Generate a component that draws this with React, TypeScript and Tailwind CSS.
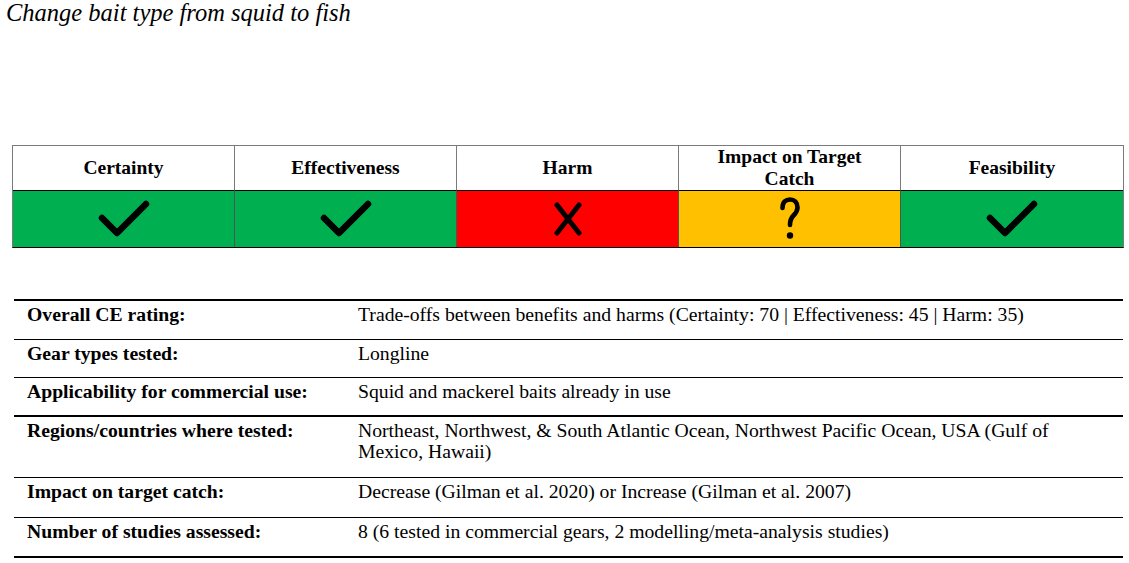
import React from "react";

type Rating = "yes" | "no" | "unknown";

const ratings: { label: string[]; rating: Rating }[] = [
  { label: ["Certainty"], rating: "yes" },
  { label: ["Effectiveness"], rating: "yes" },
  { label: ["Harm"], rating: "no" },
  { label: ["Impact on Target", "Catch"], rating: "unknown" },
  { label: ["Feasibility"], rating: "yes" },
];

const details = [
  { label: "Overall CE rating:", value: "Trade-offs between benefits and harms (Certainty: 70 | Effectiveness: 45 | Harm: 35)", h: "h-[39px]", thick: false },
  { label: "Gear types tested:", value: "Longline", h: "h-[38px]", thick: false },
  { label: "Applicability for commercial use:", value: "Squid and mackerel baits already in use", h: "h-[39px]", thick: true },
  { label: "Regions/countries where tested:", value: "Northeast, Northwest, & South Atlantic Ocean, Northwest Pacific Ocean, USA (Gulf of Mexico, Hawaii)", h: "h-[61px]", thick: false },
  { label: "Impact on target catch:", value: "Decrease (Gilman et al. 2020) or Increase (Gilman et al. 2007)", h: "h-[40px]", thick: false },
  { label: "Number of studies assessed:", value: "8 (6 tested in commercial gears, 2 modelling/meta-analysis studies)", h: "h-[40px]", thick: true },
];

const CheckIcon = () => (
  <svg width="52" height="38" viewBox="0 0 52 38">
    <path d="M4 18 L19 33 L48 4" fill="none" stroke="#000" strokeWidth="6.5" strokeLinecap="round" strokeLinejoin="round" />
  </svg>
);

const CrossIcon = () => (
  <svg width="28" height="34" viewBox="0 0 28 34">
    <path d="M3 3 L25 31 M25 3 L3 31" fill="none" stroke="#000" strokeWidth="5" strokeLinecap="round" />
  </svg>
);

const QuestionIcon = () => (
  <svg width="20" height="44" viewBox="0 0 20 44">
    <path d="M2.5 11 C2.5 5 6 2.5 10 2.5 C14.5 2.5 17.5 5.5 17.5 10.5 C17.5 14.5 15.5 16.5 13.5 18.5 C11 21 10 23 10 28" fill="none" stroke="#000" strokeWidth="4.6" strokeLinecap="round" />
    <circle cx="10" cy="38.5" r="3.2" fill="#000" />
  </svg>
);

const ratingCell = (rating: Rating) => {
  if (rating === "yes") return { bg: "bg-[#00b050]", icon: <CheckIcon /> };
  if (rating === "no") return { bg: "bg-[#ff0000]", icon: <CrossIcon /> };
  return { bg: "bg-[#ffc000]", icon: <QuestionIcon /> };
};

export default function App() {
  return (
    <div className="w-[1129px] h-[563px] bg-white text-black font-['Liberation_Serif','Times_New_Roman',serif] overflow-hidden">
      {/* Title */}
      <h1 className="pl-[6px] text-[24.5px] leading-[26px] italic font-normal">
        Change bait type from squid to fish
      </h1>

      {/* Ratings strip */}
      <div className="ml-[12px] mt-[119px] w-[1112px] grid grid-cols-5 border border-[#7a7a7a] border-b-black">
        {ratings.map((r, i) => (
          <div
            key={r.label.join(" ")}
            className={`h-[45px] flex flex-col items-center justify-center text-[19.5px] leading-[22px] font-bold border-b border-black ${i < 4 ? "border-r border-r-[#7a7a7a]" : ""}`}
          >
            {r.label.map((line) => (
              <span key={line}>{line}</span>
            ))}
          </div>
        ))}
        {ratings.map((r, i) => {
          const cell = ratingCell(r.rating);
          return (
            <div
              key={"c" + i}
              className={`h-[56px] flex items-center justify-center ${cell.bg} ${i < 4 ? "border-r border-r-[#4a5a4f]" : ""}`}
            >
              {cell.icon}
            </div>
          );
        })}
      </div>

      {/* Details table */}
      <div className="ml-[14px] mt-[51px] w-[1109px] border-t-2 border-black">
        {details.map((d) => (
          <div
            key={d.label}
            className={`${d.h} flex items-start text-[19.7px] leading-[21px] ${d.thick ? "border-b-2" : "border-b"} border-black`}
          >
            <div className="w-[331px] shrink-0 pl-[13px] pt-[3px] font-bold">{d.label}</div>
            <div className="w-[730px] pl-[13px] pt-[3px]">{d.value}</div>
          </div>
        ))}
      </div>
    </div>
  );
}
